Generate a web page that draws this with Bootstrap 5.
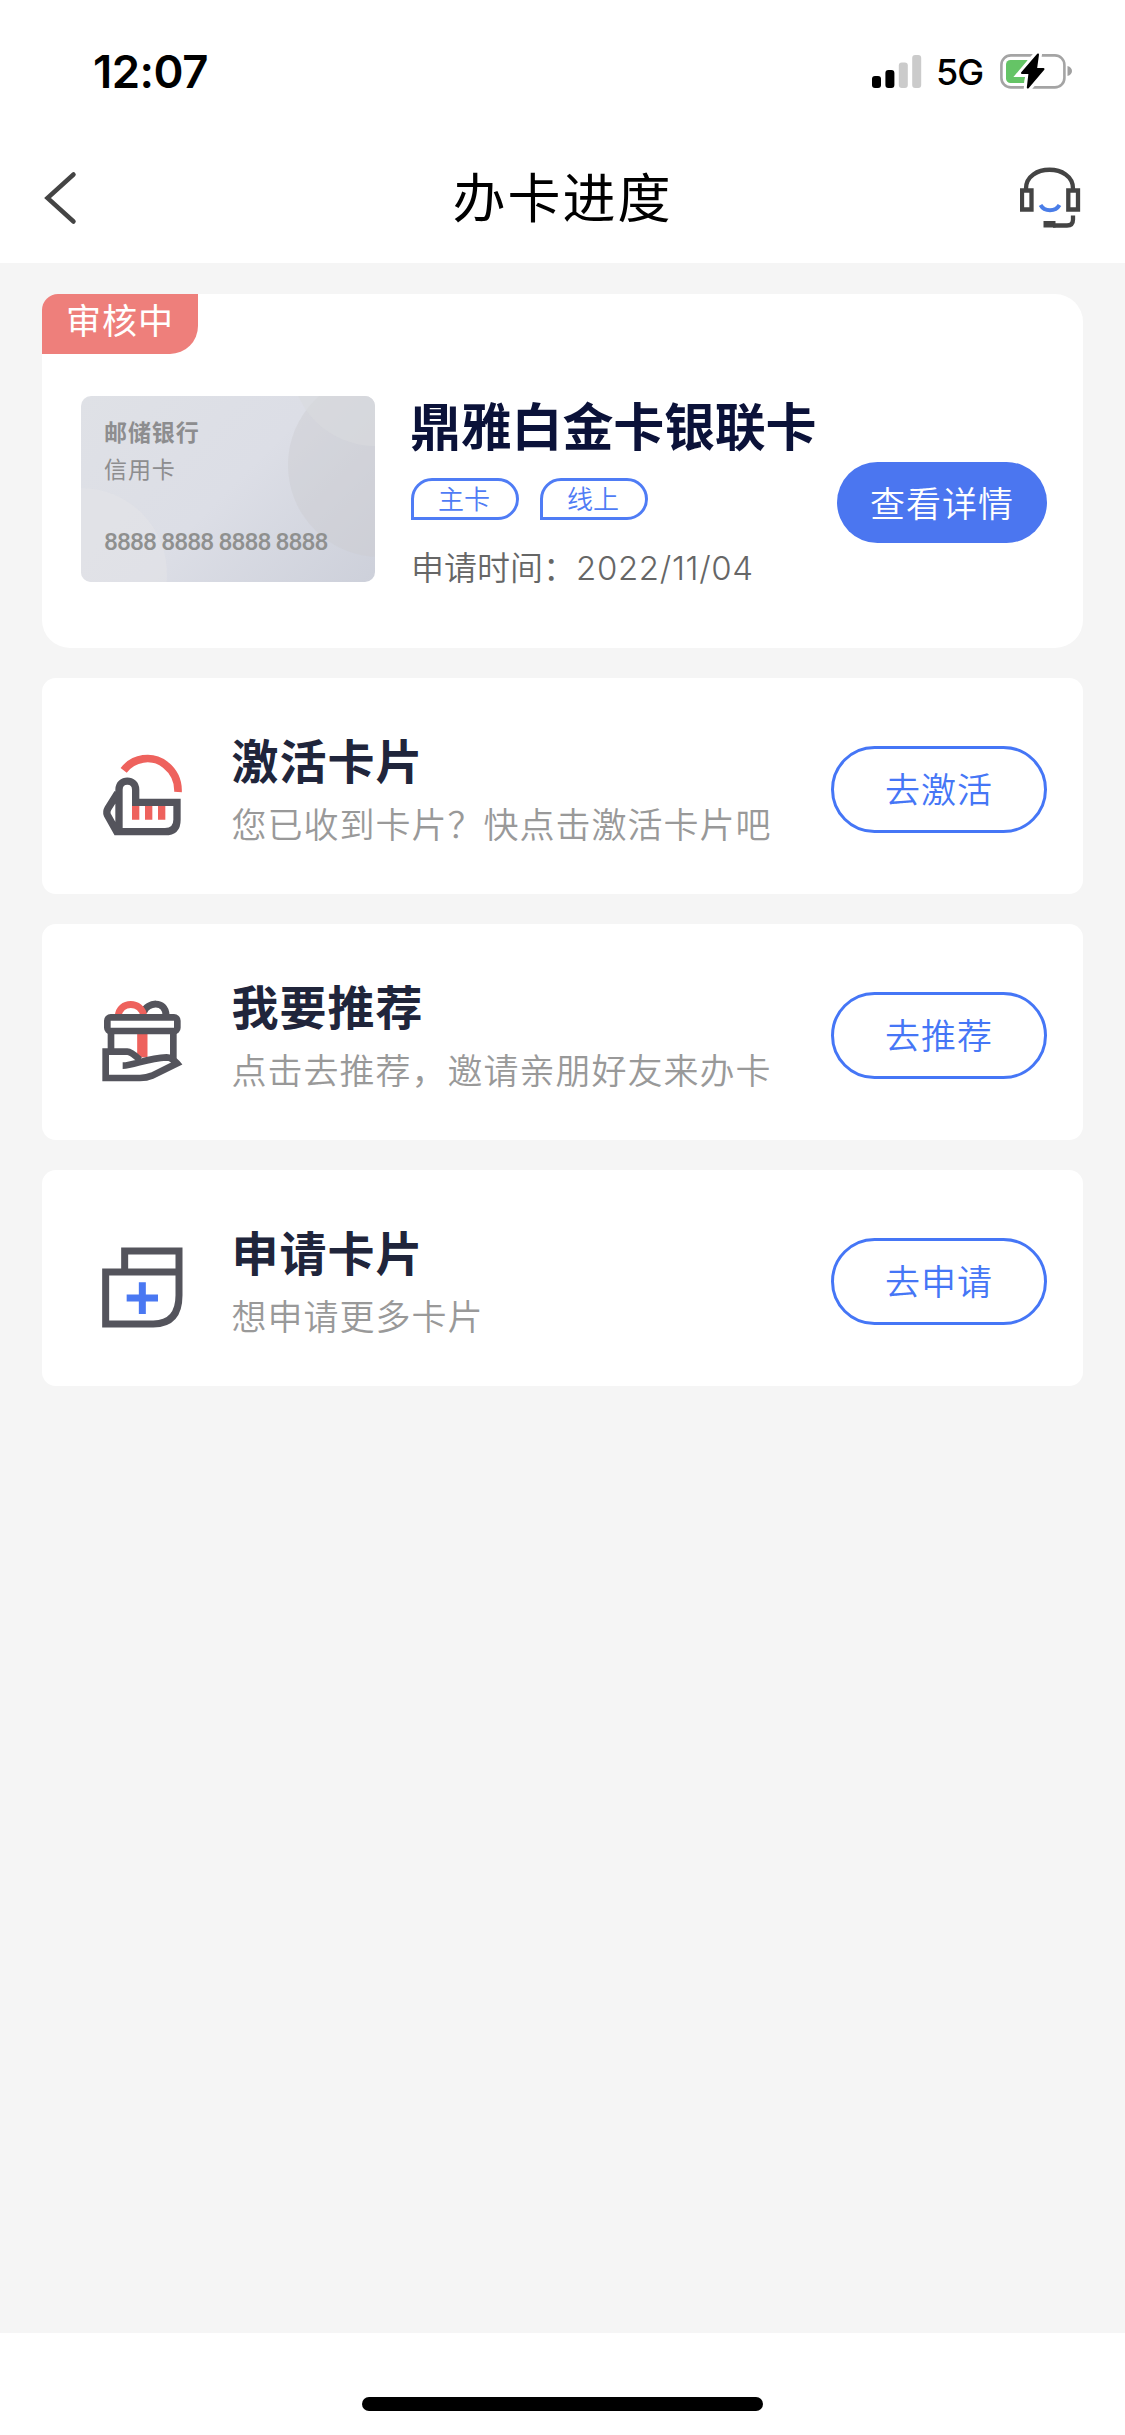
<!DOCTYPE html>
<html lang="zh-CN">
<head>
<meta charset="utf-8">
<meta name="viewport" content="width=device-width, initial-scale=1">
<title>办卡进度</title>
<link href="https://cdn.jsdelivr.net/npm/bootstrap@5.3.0/dist/css/bootstrap.min.css" rel="stylesheet">
<style>
body { font-family: "Noto Sans CJK SC", sans-serif; background: #fff; white-space: nowrap; }
svg { display: block; flex: none; }
.screen { width: 1125px; height: 2435px; overflow: hidden; }
.status-bar { height: 130px; padding: 0 53px 0 93px; font-family: Inter, sans-serif; color: #000; }
.clock { font-size: 45.5px; font-weight: 600; line-height: 60px; margin-top: 42px; letter-spacing: -.5px; }
.status-icons { margin-top: 51px; }
.net-type { font-size: 36px; font-weight: 500; line-height: 43px; width: 63px; padding-left: 14px; letter-spacing: -1px; }
.battery { margin-left: 14px; }
.title-bar { height: 133px; padding: 0 42px; }
.page-title { font-size: 53px; font-weight: 400; line-height: 78px; letter-spacing: 2px; color: #000; margin: 0 0 3px; }
.page-body { background: #f5f5f5; height: 2070px; padding: 31px 42px; gap: 30.3px; }
.progress-card { border: 0; border-radius: 16px 28px 28px 28px; height: 354px; flex: none; }
.state-tag { width: 156px; height: 60px; background: #ee7f7b; color: #fff; font-size: 35px; line-height: 49px; letter-spacing: 1px; padding-left: 24px; border-radius: 16px 0 28px 0; }
.bank-art { width: 294px; height: 186px; border-radius: 10px; margin: 42px 0 0 39px; overflow: hidden; position: relative; background: linear-gradient(135deg,#dfe1e6 0%,#dcdee6 50%,#cdd0da 100%); color: #8d8d8f; font-size: 23px; padding: 17px 0 0 23px; letter-spacing: .9px; }
.bank-art svg { position: absolute; left: 0; top: 0; }
.bank-art div { position: relative; line-height: 37px; }
.bank-art .card-no { font-family: Roboto, sans-serif; font-weight: 500; font-size: 24.5px; letter-spacing: -.92px; margin-top: 36px; color: #8f908f; }
.detail { margin: 35px 0 0 36px; }
.card-name { font-size: 51px; font-weight: 600; line-height: 70px; letter-spacing: -.2px; color: #0b1239; margin: 0 0 19px -1px; }
.kind-list { gap: 21px; }
.kind-tag { width: 108px; height: 42px; border: 3px solid #4f7cf5; border-radius: 21px 21px 21px 0; color: #4f7cf5; font-size: 26px; font-weight: 350; line-height: 34px; text-align: center; padding-right: 2px; }
.apply-date { color: #666; font-size: 33px; font-weight: 350; line-height: 48px; margin-top: 22px; }
.apply-date span { font-family: Inter, sans-serif; font-weight: 350; letter-spacing: .65px; }
.btn-detail, .btn-go { font-weight: 350; line-height: 1; border-radius: 44px; letter-spacing: 1px; font-size: 35px; padding: 0 0 3px; }
.btn-detail { width: 210px; height: 81px; background: #4b76f0; color: #fff; margin: 108px 36px 0 auto; }
.btn-go { width: 216px; height: 87px; border: 3px solid #4576f6; color: #4576f6; margin: 6px 36px 0 auto; }
.task-card { border: 0; border-radius: 14px; height: 215.7px; flex: none; padding-left: 58px; }
.task-card svg { margin-top: 19px; }
.task-text { margin: 2px 0 0 46.5px; }
.task-text h2 { font-size: 47px; font-weight: 600; line-height: 64px; letter-spacing: 1px; color: #20253b; margin: 0; }
.task-text p { font-size: 35px; font-weight: 350; line-height: 50px; letter-spacing: 1px; color: #999; margin: 7px 0 0; }
.home-bar { width: 401px; height: 14px; border-radius: 7px; background: #000; margin: 64px auto 0; }
</style>
</head>
<body>
<div class="screen d-flex flex-column">
  <header>
    <div class="status-bar d-flex justify-content-between align-items-start">
      <div class="clock">12:07</div>
      <div class="status-icons d-flex">
        <svg width="50" height="44" viewBox="872 51 50 44"><g fill="#000"><rect x="872" y="76" width="9" height="12" rx="3"/><rect x="885.4" y="70" width="9" height="18" rx="3"/></g><g fill="#cbcbcb"><rect x="898.8" y="62.500" width="9" height="25.500" rx="3"/><rect x="912.2" y="55" width="9" height="33" rx="3"/></g></svg>
        <div class="net-type">5G</div>
        <svg class="battery" width="73" height="44" viewBox="999 51 73 44"><rect x="1001.400" y="55.400" width="63" height="32" rx="9.500" fill="none" stroke="#a4a4a4" stroke-width="2.600"/><path d="M1067.500 66c6 1.500 6 8.500 0 10z" fill="#a0a0a0"/><rect x="1006" y="60" width="27" height="23" rx="4.500" fill="#65c466"/><path d="M1028 59h10v25h-14z" fill="#fff"/><path d="M1038 54 L1022 73 H1029.500 L1027.800 88 L1043.500 69 H1036z" fill="#000" stroke="#fff" stroke-width="8"/><path d="M1038 54.500 L1022 73 H1029.500 L1027.800 87.500 L1043.500 69 H1036z" fill="#000" stroke="#000" stroke-width="2" stroke-linejoin="round"/></svg>
      </div>
    </div>
    <nav class="title-bar d-flex justify-content-between align-items-center">
      <svg width="63" height="64" viewBox="42 165 63 64"><path d="M73.500 174.500 L47.500 198 L73.500 221.500" fill="none" stroke="#444" stroke-width="4.500" stroke-linecap="round"/></svg>
      <h1 class="page-title">办卡进度</h1>
      <svg width="63" height="64" viewBox="1020 165.500 63 64"><g fill="none" stroke="#444" stroke-width="4.300"><path d="M1026 190v-1c0-25 47-25 47 0v1"/><path d="M1022 191h9.500v19h-9.500zM1068.300 191h9.700v19h-9.700z"/><path d="M1073 216v4q0 6-6 6h-14"/></g><path d="M1043.500 221.500h12v6.500h-12z" fill="#444"/><path d="M1040.500 205.500c4 7 15 7 19 0" fill="none" stroke="#4a7de8" stroke-width="4"/></svg>
    </nav>
  </header>
  <main class="page-body d-flex flex-column">
    <section class="card progress-card">
      <div class="state-tag">审核中</div>
      <div class="d-flex align-items-start">
        <div class="bank-art">
          <svg width="294" height="186" viewBox="0 0 294 186"><circle cx="0" cy="178" r="86" fill="#e3e4e8" opacity=".55"/><circle cx="299" cy="69" r="92" fill="#cccdd0" opacity=".45"/><circle cx="294" cy="-34" r="84" fill="#d8dade" opacity=".6"/></svg>
          <div class="fw-bold">邮储银行</div>
          <div>信用卡</div>
          <div class="card-no">8888 8888 8888 8888</div>
        </div>
        <div class="detail">
          <h2 class="card-name">鼎雅白金卡银联卡</h2>
          <div class="kind-list d-flex"><span class="kind-tag">主卡</span><span class="kind-tag">线上</span></div>
          <div class="apply-date">申请时间：<span>2022/11/04</span></div>
        </div>
        <button class="btn btn-detail" type="button">查看详情</button>
      </div>
    </section>
    <section class="card task-card flex-row align-items-center">
      <svg width="85" height="85" viewBox="210 280 255 255" fill="none"><path d="M281 332C310 294 366 284 406 315Q446 347 444 397" stroke="#ee625d" stroke-width="23"/><path d="M306 437h22v43h-22zM345 437h22v43h-22zM384 437h22v43h-22z" fill="#ee625d"/><path d="M267 516V390C267 356 317 356 317 390V428H441V480Q441 516 405 516H260L232 466Q228 456 234 446L263 400" stroke="#54545c" stroke-width="22"/></svg>
      <div class="task-text"><h2>激活卡片</h2><p>您已收到卡片？快点击激活卡片吧</p></div>
      <button class="btn btn-go" type="button">去激活</button>
    </section>
    <section class="card task-card flex-row align-items-center">
      <svg width="85" height="85" viewBox="210 267 255 255" fill="none"><path d="M341 306C352 276 406 270 408 315" stroke="#54545c" stroke-width="21"/><path d="M265 318C268 272 336 272 341 318" stroke="#ee625d" stroke-width="21"/><path d="M337 370v72" stroke="#ee625d" stroke-width="31"/><g stroke="#54545c" stroke-width="20"><rect x="232" y="322" width="210" height="41" rx="10"/><path d="M243 365V424M430 365V446"/><path d="M278 467C312 467 350 444 410 442Q425 442 441 460L366 497Q350 504 330 504H227V425H292Q303 425 329 449"/></g></svg>
      <div class="task-text"><h2>我要推荐</h2><p>点击去推荐，邀请亲朋好友来办卡</p></div>
      <button class="btn btn-go" type="button">去推荐</button>
    </section>
    <section class="card task-card flex-row align-items-center">
      <svg width="85" height="85" viewBox="210 284 255 255" fill="none"><path d="M284 365V302H447V435Q447 521 370 521H227V365H447" stroke="#54545c" stroke-width="21"/><path d="M337 396v95M290 443h94" stroke="#4a78f2" stroke-width="21"/></svg>
      <div class="task-text"><h2>申请卡片</h2><p>想申请更多卡片</p></div>
      <button class="btn btn-go" type="button">去申请</button>
    </section>
  </main>
  <footer><div class="home-bar"></div></footer>
</div>
<script src="https://cdn.jsdelivr.net/npm/bootstrap@5.3.0/dist/js/bootstrap.bundle.min.js"></script>
</body>
</html>
